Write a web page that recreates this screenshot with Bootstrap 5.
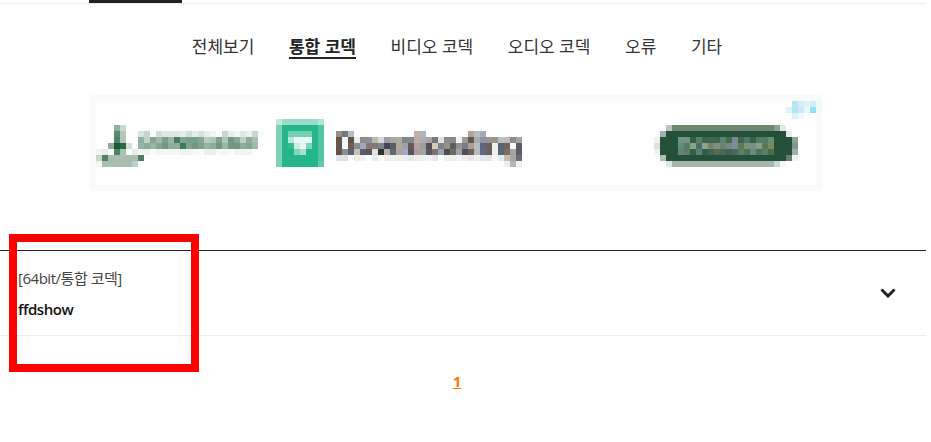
<!DOCTYPE html>
<html lang="ko"><head><meta charset="utf-8">
<link href="https://cdn.jsdelivr.net/npm/bootstrap@5.3.0/dist/css/bootstrap.min.css" rel="stylesheet">
<style>
html,body{overflow:hidden}
body{font-family:"Open Sans","Noto Sans CJK KR",sans-serif;color:#222;background:#fff;height:442px}
.shell{width:926px;position:relative}
.topline{height:4px;border-bottom:1px solid #eee}
.topmark{width:93px;height:3px;margin-left:89px;background:#222}
.tabbar{height:91px;padding:30px 12px 0 0;gap:34.6px;font-size:17px;line-height:26px}
.tabbar a{color:#333;text-decoration:none;height:25px}
.tabbar a.on{font-weight:700;color:#222;border-bottom:2px solid #222}
.adbox{width:732px;height:96px;margin-left:90px;display:block}
.listrow{margin-top:59px;border-top:1px solid #222;border-bottom:1px solid #eee;height:86px;padding:0 30px 0 18px}
.cat{font-size:15px;line-height:22px;letter-spacing:-.47px;color:#444;margin-top:16px}
.ttl{font-size:15px;line-height:22px;font-weight:600;letter-spacing:-.45px;margin-top:9px;color:#111}
.chev{margin-top:37px}
.pager{margin-top:34px;padding-right:12px;font-size:15px;line-height:22px;font-weight:700;color:#f70;text-decoration:underline}
.redbox{position:absolute;left:9px;top:234px;width:190px;height:138px;border:8px solid #f00}
</style></head><body>
<div class="shell">
<div class="topline"><div class="topmark"></div></div>
<nav class="tabbar d-flex justify-content-center">
<a href="#">전체보기</a><a href="#" class="on">통합 코덱</a><a href="#">비디오 코덱</a><a href="#">오디오 코덱</a><a href="#">오류</a><a href="#">기타</a>
</nav>
<svg id="adpic" class="adbox" viewBox="90 95 732 96" shape-rendering="crispEdges" aria-hidden="true"><rect x="90" y="95" width="732" height="96" fill="#fafafa"/><rect x="96" y="101" width="720" height="84" fill="#fefefe"/></svg>
<div class="listrow d-flex justify-content-between align-items-start">
<div><div class="cat">[64bit/통합 코덱]</div><div class="ttl">ffdshow</div></div>
<svg class="chev" width="16" height="10" viewBox="0 0 16 10"><path d="M1.5 1.5L8 8l6.5-6.5" fill="none" stroke="#222" stroke-width="3"/></svg>
</div>
<div class="text-center pager">1</div>
<div class="redbox"></div>
</div>
<script src="https://cdn.jsdelivr.net/npm/bootstrap@5.3.0/dist/js/bootstrap.bundle.min.js"></script>
<script>
/* the ad is a pixelated banner: [x of first block, y, colours of 6px blocks] */
var g="#a9bdb0",t="#24b58c",d="#24503a",m="#9adcc8",o="#6c8870",s="#a6b6aa";
var rows=[
[114,125,"#8fae9f #c8d8cf"],
[114,131,"#5a8b70 #b0c8bb"],
[138,131,"#d8e4dd #c4d5cb #fafcfb #d0dfd6 #dfe8e3 #dde6e1 #dfe7e3 #e6ede9 #d2dfd8 #e6ece9 #d6e2dc #e8efeb #f0f4f2 #fdfdfd #c5d5cc #e6eeea #f3f6f4 #e0e8e4 #ebf0ed #c6d6cd #f9fbfa"],
[114,137,"#4f8366 #aec7ba"],
[138,137,"#8fb09e #c0d2c8 #84a692 #9db9aa #78a088 #9ab4a5 #417d5c #7fa38f #7aa08a #7aa08a #83a895 #b8ccc0 #aec6b8 #7ca28c #aec6b8 #6f9a80 #86a892 #bed0c6 #8eac9a #a6bfb1"],
[108,143,"#8cab9a #1a5a32 #2a6a45 #cfe0d7"],
[138,143,"#96b3a3 #8dad9b #9ab5a6 #83a68f #6f9880 #90ac9b #90ac9b #3f7b5a #7fa38f #6f9880 #7fa38f #96b3a3 #8dad9b #6f9880 #9ab5a6 #6f9880 #6f9880 #8dad9b #86a892 #9fb9ac"],
[96,149,"#f0f3f1 #e8eeea #fbfdfc #4f8366 #a8c2b4 #fff #e6ece9"],
[138,149,"#f3f6f4 #eff3f1 #fafbfa #f0f4f2 #f5f7f6 #f5f7f6 #f6f8f7 #f0f4f2 #eff3f1 #f6f8f7 #fafbfa #e9efec #e9efec #f8faf9 #f2f5f3 #fafbfa #f2f5f3 #eff3f1 #f2f5f3"],
[96,155,"#c8d6ce #558065 "+[g,g,g,g,g].join(" ")+" #4d7c5f"],
[96,161,"#f3f5f4 "+[g,g,g,g,g].join(" ")+" #bfcfc6"],
/* teal logo */
[276,119,"#bfe9dc "+[m,m,m,m,m,m].join(" ")+" #b0e4d3"],
[276,125,"#7dd2b7 "+[t,t,t,t,t,t].join(" ")+" #52c4a3"],
[276,131,"#7dd2b7 "+t+" #72cfb2 #72cfb2 #72cfb2 #72cfb2 "+t+" #52c4a3"],
[276,137,"#7dd2b7 "+t+" #b8e8da #e8f8f3 #eafaf5 #eafaf5 "+t+" #52c4a3"],
[276,143,"#7dd2b7 "+t+" #35ba94 #cdeee4 #e6f7f2 #7dd6bb "+t+" #52c4a3"],
[276,149,"#7dd2b7 "+t+" "+t+" #7fd6bb #a6e2d0 "+t+" "+t+" #52c4a3"],
[276,155,"#7dd2b7 "+[t,t,t,t,t,t].join(" ")+" #52c4a3"],
[276,161,"#7dd2b7 "+[t,t,t,t,t,t].join(" ")+" #60c9aa"],
/* Downloading */
[336,131,"#978f86 #74767c #b8bcc2"],
[414,131,"#c2b0a8 #adb4bb"],
[468,131,"#b0a59c #b6bcc2 #a5aab4"],
[336,137,"#62544f #f0f7fb #5e5249 #e8ecee #8b8c8d #8b909c #c0b5ad #d4d8dc #9b9ca6 #aaa6a0 #abaaa8 #848484 #808890 #c0aea5 #abafb5 #a8a4a0 #76757a #dfe2e4 #908a84 #8a8a8a #f0f2f4 #a39a93 #615a50 #a6adb3 #90949e #9c9690 #9a948f #b6c0c8 #c2b8b2 #888c96 #a0a4a4"],
[336,143,"#62544f #f4fafd #6e5f53 #8b8e90 #9fa9bb #897870 #7f7b78 #808284 #404858 #586068 #b2a898 #9aa0b0 #665a58 #b3a399 #9a9c9e #554f55 #d8c8bc #7e8086 #968f88 #5e5e5c #90908e #787c8c #ac9e92 #b8bcc0 #5e667c #6c5e5e #f0f0ec #5a6474 #70655e #fafafa #5c5a66"],
[336,149,"#5f5550 #8a8e90 #596370 #c8bfb8 #5a5e66 #5a5556 #dfe2e4 #303030 #b8b0a4 #5c6a78 #aea495 #a0aac6 #5d5458 #a8a098 #a4a4a4 #585860 #7a7474 #9ca4aa #4a4c58 #706a62 #9fa2a6 #505056 #6e6258 #b8bcbe #5e6880 #6a5e5e #f0f0ec #5c6676 #787068 #a8a4a0 #5e5c68"],
[336,155,"#e2e0e0 #e0e0e0 #fff #f0ece8 #eef0f2 #fdfdfd #e8eaec #fafaf5 #f0f0ea #eef0f2 #f0eeee #eceef2 #e6e6e6 #f0eeec #f0f0f0 #f0f2f4 #e4e6e8 #fff #eef0ee #f0f0ee #f2f2f2 #f0ecec #e8e4e4 #f0f0f4 #e4e4ec #e4e2ea #fbfbfb #e8e8ec #c8bcb6 #a8a4a0 #686e7c"],
[504,161,"#f0ecea #b8b4b4 #eef0f4"],
/* Download button */
[666,125,"#b8c4bd "+Array(17).fill(o).join(" ")+" #8aa290 #e4e9e6"],
[660,131,"#9fb3a8 "+Array(20).fill(d).join(" ")+" #e6ebe8"],
[654,137,"#f0f2f1 #245239 "+d+" "+d+" #6f9688 #7a937e #31604a #5f7e64 #3f664c #3f664e #3c6650 #5c8270 #446a50 #7c8a92 #3f664e #4e7864 #34624b #527e66 #4e7e64 #6c8c6a "+d+" "+d+" #245039 #8ca599"],
[654,143,"#dbe1dd #245239 "+d+" "+d+" #5f8e7e #537c6a #8ca088 #42726a #92a090 #71866a #818e81 #708172 #708c82 #7c8e9a #5e7c52 #78927e #769282 #8a9c8a #617652 #718c64 "+d+" "+d+" #245039 #7d998a"],
[654,149,"#f0f2f1 #245239 "+d+" "+d+" #5f8672 #617c62 #336046 #627c66 #315e4a #40684c #526c50 #4c6858 #426252 #496c5a #587c66 #4a7258 #6c8c76 #4c725c #5c7c6a #4c6c47 "+d+" "+d+" #245039 #9db0a5"],
[660,155,"#b0bfb6 "+Array(20).fill(d).join(" ")+" #5f8070 #f0f3f1"],
[666,161,"#dfe5e2 "+Array(17).fill(s).join(" ")+" #cdd6d1 #f5f6f5"],
/* ad badge */
[792,101,"#b8e6f2 #d2f0f7 #def3f8 #d2eff6 #f0f8fb"],
[786,107,"#dcf3f8 #b4e6f2 #ccebf4 #eaf8fb #92e0f0 #f0f8fb"],
[792,113,"#def3f8 #f0fafc"]
];
var svg=document.getElementById("adpic"),ns=svg.namespaceURI;
rows.forEach(function(r){r[2].split(" ").forEach(function(c,i){
  var e=document.createElementNS(ns,"rect");
  e.setAttribute("x",r[0]+i*6);e.setAttribute("y",r[1]);e.setAttribute("width",6);e.setAttribute("height",6);e.setAttribute("fill",c);
  svg.appendChild(e);
});});
</script>
</body></html>
